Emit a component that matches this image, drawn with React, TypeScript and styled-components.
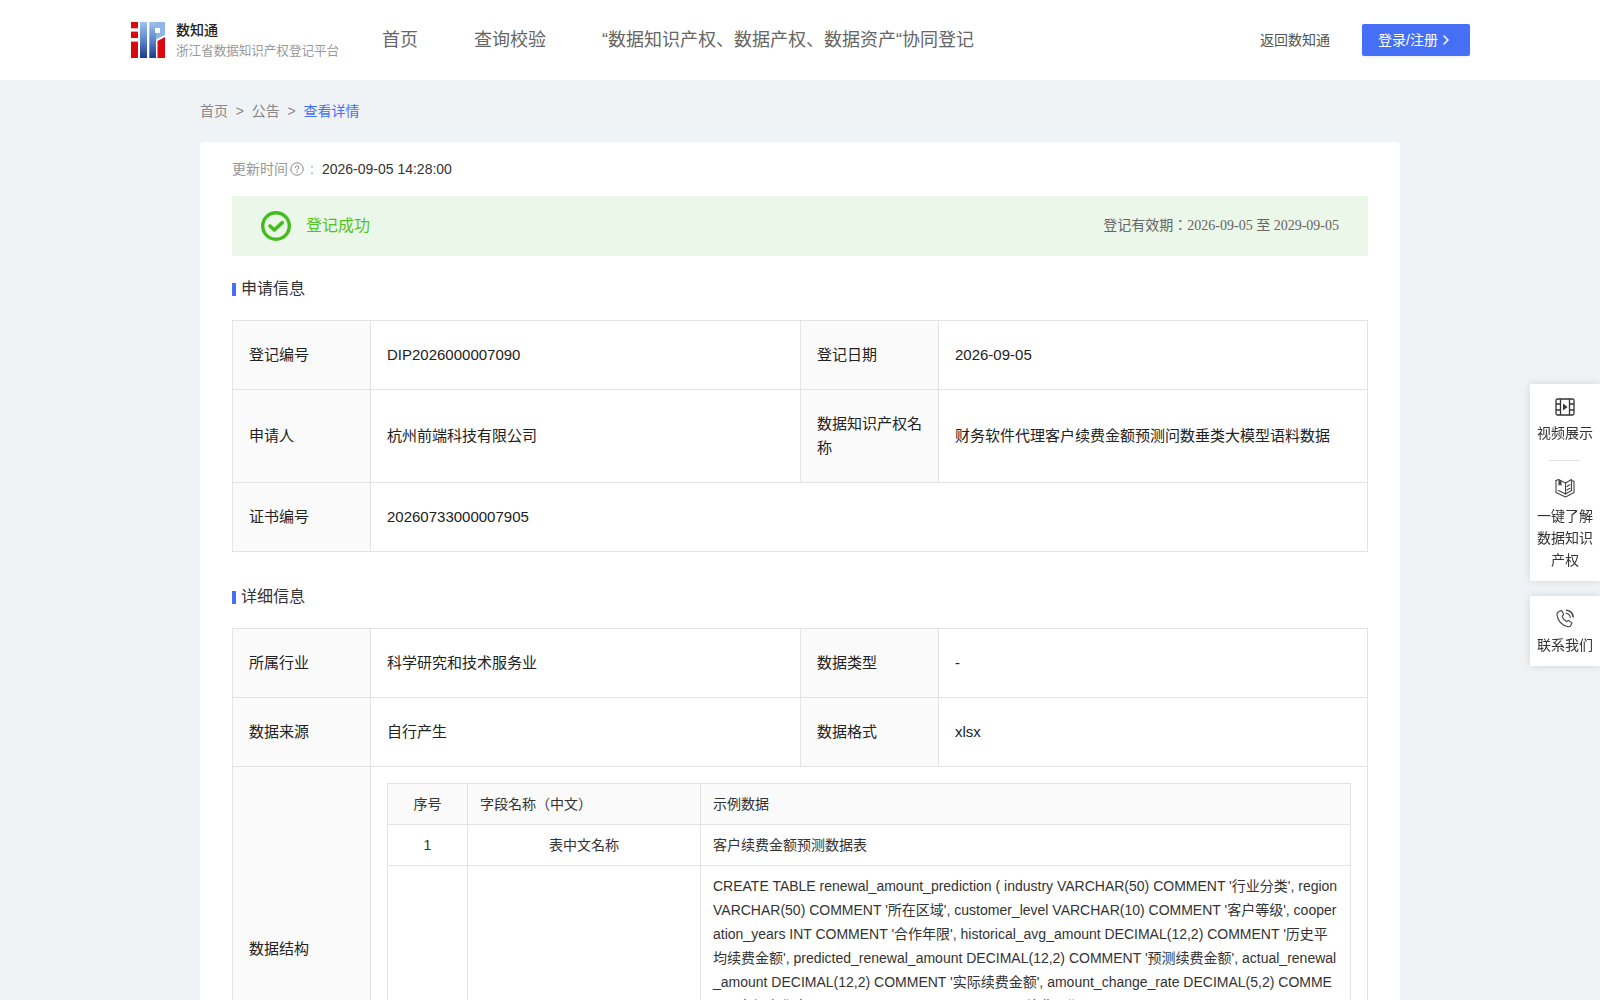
import React from "react";
import styled, { createGlobalStyle } from "styled-components";

const GlobalStyle = createGlobalStyle`
  html, body { margin: 0; padding: 0; height: 100%; overflow: hidden; background: #eff3f6; }
  body { font-family: "Liberation Sans", "Noto Sans CJK JP", sans-serif; color: #333; line-height: 1.5; }
  * { box-sizing: border-box; }
`;

const Page = styled.div`
  height: 1000px;
  overflow: hidden;
  background: #eff3f6;
`;
const Header = styled.header`
  height: 80px;
  background: #fff;
  display: flex;
  align-items: center;
  padding: 0 130px 0 131px;
`;
const Brand = styled.div`
  display: flex;
  align-items: center;
  gap: 10px;
  width: 251px;
`;
const BrandText = styled.div`
  display: flex;
  flex-direction: column;
  gap: 3px;
`;
const BrandName = styled.div`
  font-size: 14px;
  line-height: 18px;
  font-weight: 500;
  color: #222;
`;
const BrandSub = styled.div`
  font-size: 12.55px;
  line-height: 18px;
  color: #999;
  white-space: nowrap;
`;
const Nav = styled.nav`
  display: flex;
  gap: 56px;
  flex: 1;
`;
const NavItem = styled.a`
  font-size: 18px;
  color: #666;
`;
const BackLink = styled.a`
  font-size: 14px;
  color: #555;
  margin-right: 32px;
`;
const LoginButton = styled.button`
  width: 108px;
  height: 32px;
  border: none;
  border-radius: 2px;
  background: #4570f6;
  color: #fff;
  font: inherit;
  font-size: 14px;
  display: flex;
  align-items: center;
  justify-content: center;
  gap: 3px;
  padding: 0 3px 0 0;
  box-shadow: 0 2px 3px rgba(0, 0, 0, 0.06);
`;
const Breadcrumb = styled.div`
  width: 1200px;
  margin: 0 auto;
  height: 62px;
  display: flex;
  align-items: center;
  font-size: 14px;
  color: #888;
`;
const Sep = styled.span`
  margin: 0 7.8px;
`;
const Current = styled.span`
  color: #4570f6;
`;
const Card = styled.main`
  width: 1200px;
  margin: 0 auto;
  background: #fff;
  border-radius: 4px;
  padding: 18px 32px 32px;
`;
const UpdateRow = styled.div`
  display: flex;
  align-items: center;
  height: 18px;
  font-size: 14px;
  color: #999;
`;
const UpdateValue = styled.span`
  color: #333;
`;
const Colon = styled.span`
  margin: 0 8px 0 6px;
`;
const Status = styled.div`
  margin-top: 18px;
  height: 60px;
  background: #ebf7e8;
  display: flex;
  align-items: center;
  justify-content: space-between;
  padding: 0 29px;
`;
const StatusLeft = styled.div`
  display: flex;
  align-items: center;
  gap: 15px;
  font-size: 16px;
  color: #52c41a;
`;
const Validity = styled.div`
  font-family: "Liberation Serif", "Noto Sans CJK JP", serif;
  font-size: 14px;
  color: #666;
  margin-bottom: 2px;
`;
const SectionTitle = styled.h2<{ $top: number }>`
  margin: ${(p) => p.$top}px 0 21px;
  height: 20px;
  font-size: 16px;
  line-height: 20px;
  font-weight: 400;
  color: #333;
  display: flex;
  align-items: center;
  gap: 5px;
  &::before {
    content: "";
    width: 4px;
    height: 13px;
    background: #4570f6;
  }
`;
const InfoTable = styled.table`
  width: 1135px;
  border-collapse: collapse;
  table-layout: fixed;
  font-size: 15px;
  line-height: 24px;
  color: #222;
  border: 1px solid #e3e3e3;
`;
const Label = styled.th`
  padding: 22px 16px;
  background: #fafafa;
  border: 1px solid #e3e3e3;
  font-weight: 400;
  text-align: left;
`;
const Value = styled.td`
  padding: 22px 16px;
  border: 1px solid #e3e3e3;
`;
const NestedCell = styled.td`
  padding: 16px;
  border: 1px solid #e3e3e3;
`;
const FieldTable = styled.table`
  width: 100%;
  border-collapse: collapse;
  table-layout: fixed;
  font-size: 14px;
  line-height: 24px;
  color: #333;
`;
const FieldHead = styled.th<{ $center?: boolean }>`
  padding: 8px 12px;
  background: #fafafa;
  border: 1px solid #e3e3e3;
  font-weight: 400;
  text-align: ${(p) => (p.$center ? "center" : "left")};
`;
const FieldCell = styled.td<{ $center?: boolean; $valign?: string; $height?: number }>`
  padding: 8px 12px;
  border: 1px solid #e3e3e3;
  text-align: ${(p) => (p.$center ? "center" : "left")};
  vertical-align: ${(p) => p.$valign || "middle"};
  height: ${(p) => (p.$height ? `${p.$height}px` : "auto")};
  word-break: break-all;
`;
const SideDock = styled.aside`
  position: fixed;
  right: 0;
  top: 384px;
  width: 70px;
  display: flex;
  flex-direction: column;
  gap: 15px;
`;
const DockPanel = styled.div`
  background: #fff;
  box-shadow: 0 0 8px rgba(0, 0, 0, 0.12);
  padding: 12px 0 10px;
  display: flex;
  flex-direction: column;
  align-items: center;
`;
const DockItem = styled.div`
  width: 60px;
  display: flex;
  flex-direction: column;
  align-items: center;
  font-size: 14px;
  line-height: 22px;
  color: #333;
  text-align: center;
`;
const DockIcon = styled.div<{ $gap: number }>`
  height: 22px;
  margin-bottom: ${(p) => p.$gap}px;
  display: flex;
  align-items: center;
  justify-content: center;
`;
const DockDivider = styled.div`
  width: 32px;
  height: 1px;
  background: #e4e4e4;
  margin: 16px 0 16px;
`;

const Logo = () => (
  <svg width="35" height="36" viewBox="0 0 35 36">
    <defs>
      <linearGradient id="lg" x1="0" y1="0" x2="0" y2="1">
        <stop offset="0" stopColor="#9cc3ee" />
        <stop offset="0.5" stopColor="#5c86c9" />
        <stop offset="1" stopColor="#1d3a8c" />
      </linearGradient>
    </defs>
    <rect x="0" y="0" width="7" height="36" fill="#d9090f" />
    <rect x="0" y="6.3" width="7" height="3.3" fill="#fff" />
    <rect x="0" y="16" width="7" height="3.6" fill="#fff" />
    <rect x="9" y="0" width="7" height="36" fill="url(#lg)" />
    <rect x="18.3" y="0" width="6.7" height="36" fill="url(#lg)" />
    <path d="M25 0h9v13l-9 4.5z" fill="#8fb6e8" />
    <rect x="24" y="6" width="5" height="5" fill="#fff" />
    <path d="M26.5 19l7.5-4v21h-7.5z" fill="#d9090f" />
  </svg>
);

const CheckCircle = () => (
  <svg width="30" height="30" viewBox="0 0 30 30" fill="none">
    <circle cx="15" cy="15" r="13.3" stroke="#43bd1c" strokeWidth="3.4" />
    <path d="M9 15l4.4 4 7.8-7.4" stroke="#43bd1c" strokeWidth="3.6" strokeLinecap="round" strokeLinejoin="round" />
  </svg>
);

const Help = () => (
  <svg width="14" height="14" viewBox="0 0 14 14" fill="none" style={{ marginLeft: 2 }}>
    <circle cx="7" cy="7" r="6.2" stroke="#888" />
    <path d="M5.2 5.6a1.8 1.8 0 1 1 2.6 1.6c-.6.3-.8.6-.8 1.2" stroke="#888" strokeLinecap="round" />
    <circle cx="7" cy="10.2" r=".7" fill="#888" />
  </svg>
);

const Chevron = () => (
  <svg width="10" height="12" viewBox="0 0 10 12" fill="none">
    <path d="M3 2L7 6 3 10" stroke="#fff" strokeWidth="1.5" strokeLinecap="round" strokeLinejoin="round" />
  </svg>
);

const FilmIcon = () => (
  <svg width="20" height="18" viewBox="0 0 20 18" fill="none" stroke="#333" strokeWidth="1.3">
    <rect x="1" y="1" width="18" height="16" rx="1.5" />
    <path d="M5.5 1v16M14.5 1v16M1 6h4.5M1 12h4.5M14.5 6H19M14.5 12H19" />
    <path d="M8 5.6l4.6 3.4L8 12.4z" fill="#333" stroke="none" />
  </svg>
);

const BookIcon = () => (
  <svg width="20" height="20" viewBox="0 0 20 20" fill="none" stroke="#444" strokeWidth="1.1" strokeLinejoin="round" strokeLinecap="round">
    <path d="M16.5 3H19v11.5L10.5 19 1 14.5V2.5" />
    <path d="M1 2.5l2.5-1 7 3.5 6-3.5v11l-6 3.5-7-3.5" />
    <path d="M10.5 5v11" />
    <path d="M3.5 1.5l3 1.5v5L5 6.8 3.5 8z" fill="#444" stroke="none" />
    <path d="M11.8 8.5l3.2-1.7M11.8 12l3.2-1.7" />
  </svg>
);

const PhoneIcon = () => (
  <svg width="20" height="20" viewBox="0 0 20 20" fill="none" stroke="#444" strokeWidth="1.1" strokeLinecap="round" strokeLinejoin="round">
    <path d="M4.5 2.2l2.2-.6 2 4-1.7 1.5c.7 2.4 2.4 4.4 4.7 5.5l1.9-1.3 3.3 2.8-1 2.2c-.5 1.1-1.8 1.7-3 1.4C7.1 16.4 3 12 2 6.2c-.2-1.7.9-3.4 2.5-4z" />
    <path d="M11 4.2c2.2.3 3.9 2 4.3 4.2" />
    <path d="M11.5 1.2c3.5.4 6.2 3.1 6.7 6.6" strokeWidth="1.6" />
  </svg>
);

const sql =
  "CREATE TABLE renewal_amount_prediction ( industry VARCHAR(50) COMMENT '行业分类', region VARCHAR(50) COMMENT '所在区域', customer_level VARCHAR(10) COMMENT '客户等级', cooperation_years INT COMMENT '合作年限', historical_avg_amount DECIMAL(12,2) COMMENT '历史平均续费金额', predicted_renewal_amount DECIMAL(12,2) COMMENT '预测续费金额', actual_renewal_amount DECIMAL(12,2) COMMENT '实际续费金额', amount_change_rate DECIMAL(5,2) COMMENT '金额变化率', renewal_date DATE COMMENT '续费日期', contract_status VARCHAR(20) COMMENT '合同状态', renewal_probability DECIMAL(5,2) COMMENT '续费概率', model_version VARCHAR(20) COMMENT '模型版本' );";

const Columns = () => (
  <colgroup>
    <col style={{ width: 138 }} />
    <col style={{ width: 430 }} />
    <col style={{ width: 138 }} />
    <col style={{ width: 429 }} />
  </colgroup>
);

export default function App() {
  return (
    <Page>
      <GlobalStyle />
      <Header>
        <Brand>
          <Logo />
          <BrandText>
            <BrandName>数知通</BrandName>
            <BrandSub>浙江省数据知识产权登记平台</BrandSub>
          </BrandText>
        </Brand>
        <Nav>
          <NavItem>首页</NavItem>
          <NavItem>查询校验</NavItem>
          <NavItem>“数据知识产权、数据产权、数据资产“协同登记</NavItem>
        </Nav>
        <BackLink>返回数知通</BackLink>
        <LoginButton>
          登录/注册
          <Chevron />
        </LoginButton>
      </Header>
      <Breadcrumb>
        首页<Sep>&gt;</Sep>公告<Sep>&gt;</Sep>
        <Current>查看详情</Current>
      </Breadcrumb>
      <Card>
        <UpdateRow>
          更新时间
          <Help />
          <Colon>:</Colon>
          <UpdateValue>2026-09-05 14:28:00</UpdateValue>
        </UpdateRow>
        <Status>
          <StatusLeft>
            <CheckCircle />
            登记成功
          </StatusLeft>
          <Validity>登记有效期：2026-09-05 至 2029-09-05</Validity>
        </Status>
        <SectionTitle $top={23}>申请信息</SectionTitle>
        <InfoTable>
          <Columns />
          <tbody>
            <tr>
              <Label>登记编号</Label>
              <Value>DIP2026000007090</Value>
              <Label>登记日期</Label>
              <Value>2026-09-05</Value>
            </tr>
            <tr>
              <Label>申请人</Label>
              <Value>杭州前端科技有限公司</Value>
              <Label>数据知识产权名称</Label>
              <Value>财务软件代理客户续费金额预测问数垂类大模型语料数据</Value>
            </tr>
            <tr>
              <Label>证书编号</Label>
              <Value colSpan={3}>20260733000007905</Value>
            </tr>
          </tbody>
        </InfoTable>
        <SectionTitle $top={35}>详细信息</SectionTitle>
        <InfoTable>
          <Columns />
          <tbody>
            <tr>
              <Label>所属行业</Label>
              <Value>科学研究和技术服务业</Value>
              <Label>数据类型</Label>
              <Value>-</Value>
            </tr>
            <tr>
              <Label>数据来源</Label>
              <Value>自行产生</Value>
              <Label>数据格式</Label>
              <Value>xlsx</Value>
            </tr>
            <tr>
              <Label>数据结构</Label>
              <NestedCell colSpan={3}>
                <FieldTable>
                  <colgroup>
                    <col style={{ width: 80 }} />
                    <col style={{ width: 233 }} />
                    <col />
                  </colgroup>
                  <tbody>
                    <tr>
                      <FieldHead $center>序号</FieldHead>
                      <FieldHead>字段名称（中文）</FieldHead>
                      <FieldHead>示例数据</FieldHead>
                    </tr>
                    <tr>
                      <FieldCell $center>1</FieldCell>
                      <FieldCell $center>表中文名称</FieldCell>
                      <FieldCell>客户续费金额预测数据表</FieldCell>
                    </tr>
                    <tr>
                      <FieldCell $center $valign="bottom">2</FieldCell>
                      <FieldCell $center $valign="bottom">表结构</FieldCell>
                      <FieldCell $valign="top" $height={248}>{sql}</FieldCell>
                    </tr>
                  </tbody>
                </FieldTable>
              </NestedCell>
            </tr>
          </tbody>
        </InfoTable>
      </Card>
      <SideDock>
        <DockPanel>
          <DockItem>
            <DockIcon $gap={4}><FilmIcon /></DockIcon>
            视频展示
          </DockItem>
          <DockDivider />
          <DockItem>
            <DockIcon $gap={6}><BookIcon /></DockIcon>
            一键了解数据知识产权
          </DockItem>
        </DockPanel>
        <DockPanel>
          <DockItem>
            <DockIcon $gap={4}><PhoneIcon /></DockIcon>
            联系我们
          </DockItem>
        </DockPanel>
      </SideDock>
    </Page>
  );
}
